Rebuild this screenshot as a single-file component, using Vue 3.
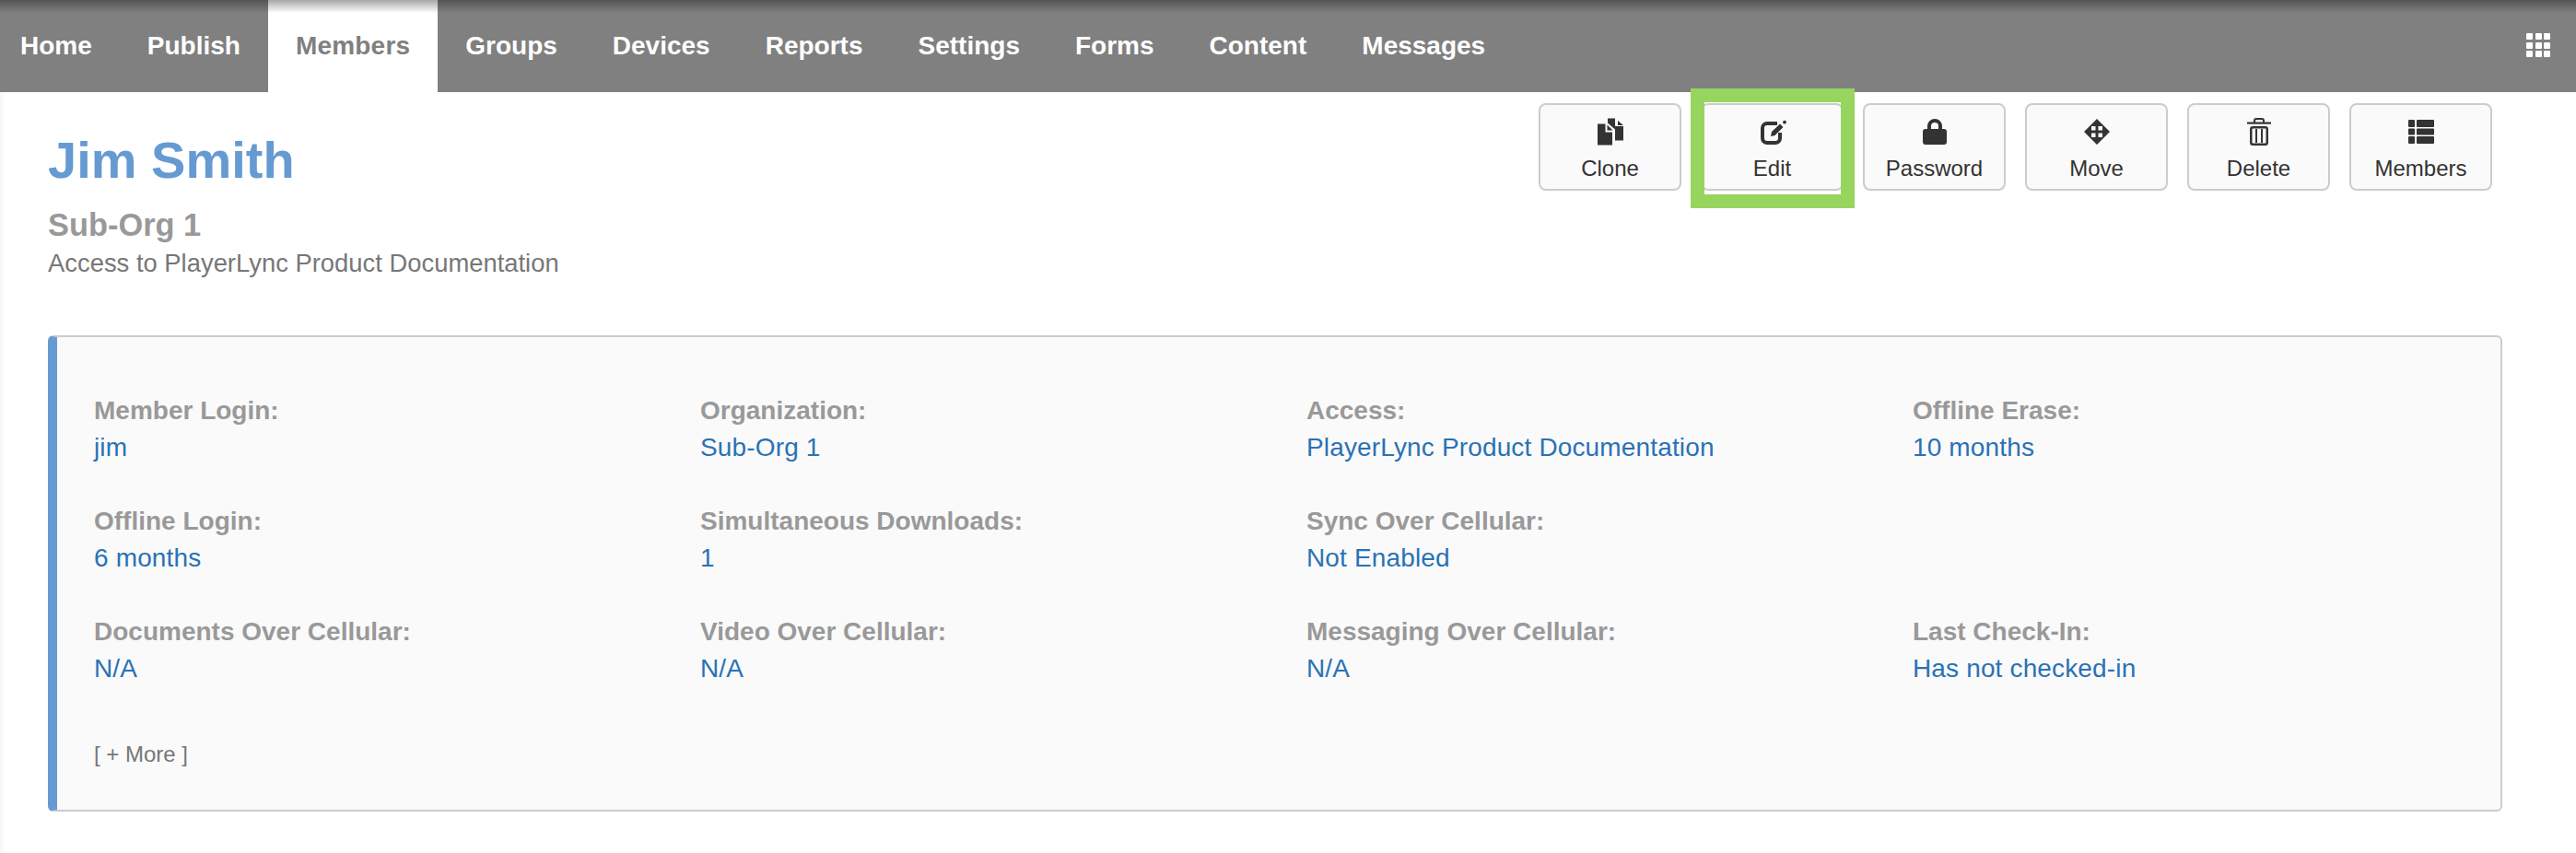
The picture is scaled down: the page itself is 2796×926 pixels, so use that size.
<template>
  <div class="page">
    <nav class="topnav">
      <a
        v-for="item in navItems"
        :key="item"
        class="nav-item"
        :class="{ active: item === 'Members' }"
      >{{ item }}</a>
      <span class="grid-icon">
        <i v-for="n in 9" :key="n"></i>
      </span>
    </nav>

    <div class="header">
      <div class="titles">
        <h1>Jim Smith</h1>
        <h2>Sub-Org 1</h2>
        <p>Access to PlayerLync Product Documentation</p>
      </div>
      <div class="actions">
        <button class="action">
          <svg width="28" height="29" viewBox="0 0 28 29">
            <path d="M0 6h8.500v9H16v14H0z" />
            <path d="M11 0h8v8.500h9V24h-9V12l-8-7z" />
            <path d="M10.500 7l6 6h-6zM22 2.500l6 5h-6z" />
          </svg>
          <span>Clone</span>
        </button>
        <button class="action">
          <svg width="30" height="28" viewBox="0 0 30 28">
            <path class="line" d="M20 5H9a5 5 0 0 0-5 5v11a5 5 0 0 0 5 5h9a5 5 0 0 0 5-5v-6" />
            <path d="M13 19l1-5 9-8.500 3.500 3.500-9 9z" />
            <circle cx="28" cy="3.700" r="1.900" />
          </svg>
          <span>Edit</span>
        </button>
        <button class="action">
          <svg width="26" height="28" viewBox="0 0 26 28">
            <path d="M5 11V8a8 8 0 0 1 16 0v3h2a3 3 0 0 1 3 3v11a3 3 0 0 1-3 3H3a3 3 0 0 1-3-3V14a3 3 0 0 1 3-3zm4 0h8V8a4 4 0 0 0-8 0z" />
          </svg>
          <span>Password</span>
        </button>
        <button class="action">
          <svg width="28" height="28" viewBox="0 0 28 28">
            <path fill-rule="evenodd" d="M14 0l14 14-14 14L0 14zM8 8v4.500h4.500V8zm7.500 0v4.500H20V8zM8 15.500V20h4.500v-4.500zm7.500 0V20H20v-4.500z" />
          </svg>
          <span>Move</span>
        </button>
        <button class="action">
          <svg width="26" height="30" viewBox="0 0 26 30">
            <rect x="0" y="4.500" width="26" height="2.200" />
            <path class="thin" d="M8 5V3a2 2 0 0 1 2-2h6a2 2 0 0 1 2 2v2" />
            <rect class="can" x="4.250" y="10.250" width="17.500" height="18.500" rx="2" />
            <rect x="9" y="12" width="2" height="15" />
            <rect x="15" y="12" width="2" height="15" />
          </svg>
          <span>Delete</span>
        </button>
        <button class="action">
          <svg width="28" height="26" viewBox="0 0 28 26">
            <path d="M1 0h5a1 1 0 0 1 1 1v6a1 1 0 0 1-1 1H1a1 1 0 0 1-1-1V1a1 1 0 0 1 1-1zM10 0h17a1 1 0 0 1 1 1v6a1 1 0 0 1-1 1H10a1 1 0 0 1-1-1V1a1 1 0 0 1 1-1zM1 9.500h5a1 1 0 0 1 1 1v5a1 1 0 0 1-1 1H1a1 1 0 0 1-1-1v-5a1 1 0 0 1 1-1zM10 9.500h17a1 1 0 0 1 1 1v5a1 1 0 0 1-1 1H10a1 1 0 0 1-1-1v-5a1 1 0 0 1 1-1zM1 18h5a1 1 0 0 1 1 1v6a1 1 0 0 1-1 1H1a1 1 0 0 1-1-1v-6a1 1 0 0 1 1-1zM10 18h17a1 1 0 0 1 1 1v6a1 1 0 0 1-1 1H10a1 1 0 0 1-1-1v-6a1 1 0 0 1 1-1z" />
          </svg>
          <span>Members</span>
        </button>
        <div class="callout"></div>
      </div>
    </div>

    <section class="panel">
      <div class="fields">
        <div v-for="(field, i) in fields" :key="i" class="field">
          <template v-if="field">
            <div class="label">{{ field.label }}:</div>
            <div class="value">{{ field.value }}</div>
          </template>
        </div>
      </div>
      <a class="more">[ + More ]</a>
    </section>
  </div>
</template>

<script setup>
const navItems = ['Home', 'Publish', 'Members', 'Groups', 'Devices', 'Reports', 'Settings', 'Forms', 'Content', 'Messages']

const fields = [
  { label: 'Member Login', value: 'jim' },
  { label: 'Organization', value: 'Sub-Org 1' },
  { label: 'Access', value: 'PlayerLync Product Documentation' },
  { label: 'Offline Erase', value: '10 months' },
  { label: 'Offline Login', value: '6 months' },
  { label: 'Simultaneous Downloads', value: '1' },
  { label: 'Sync Over Cellular', value: 'Not Enabled' },
  null,
  { label: 'Documents Over Cellular', value: 'N/A' },
  { label: 'Video Over Cellular', value: 'N/A' },
  { label: 'Messaging Over Cellular', value: 'N/A' },
  { label: 'Last Check-In', value: 'Has not checked-in' },
]
</script>

<style>
body {
  background: #fff;
}
</style>

<style scoped>
.page {
  font-family: "Liberation Sans", Arial, sans-serif;
  height: 926px;
  overflow: hidden;
  background: linear-gradient(to right, #f7f7f7, #fff 6px);
}

.topnav {
  height: 100px;
  display: flex;
  background: #808080;
  position: relative;
}

.topnav::after {
  content: "";
  position: absolute;
  left: 0;
  right: 0;
  top: 0;
  height: 14px;
  background: linear-gradient(to bottom, rgba(0, 0, 0, 0.35), rgba(0, 0, 0, 0));
  pointer-events: none;
}

.nav-item {
  padding: 0 30px;
  line-height: 100px;
  font-size: 28px;
  font-weight: 700;
  color: #fff;
}

.nav-item:first-child {
  padding-left: 22px;
}

.nav-item.active {
  background: #fff;
  color: #808080;
  letter-spacing: 0.200px;
}

.grid-icon {
  margin: 0 28px 2px auto;
  align-self: center;
  display: grid;
  grid-template-columns: repeat(3, 7px);
  grid-auto-rows: 7px;
  gap: 2.500px;
}

.grid-icon i {
  background: #fff;
  border-radius: 1px;
}

.header {
  display: flex;
  justify-content: space-between;
  padding: 12px 91px 0 52px;
}

h1 {
  margin: 31px 0 0;
  font-size: 56px;
  line-height: 62px;
  font-weight: 700;
  color: #659ad2;
}

h2 {
  margin: 18px 0 0;
  font-size: 34.400px;
  line-height: 42px;
  font-weight: 700;
  color: #999;
}

.titles p {
  margin: 4px 0 0;
  font-size: 27.400px;
  line-height: 34px;
  color: #777;
}

.actions {
  display: flex;
  gap: 21px;
  position: relative;
}

.action {
  width: 155px;
  height: 95px;
  box-sizing: border-box;
  padding: 0;
  display: flex;
  flex-direction: column;
  align-items: center;
  border: 2px solid #ccc;
  border-radius: 8px;
  background: #fafafa;
  font-family: inherit;
  font-size: 24px;
  color: #333;
}

.action svg {
  height: 30px;
  margin-top: 14px;
  fill: #333;
}

.action .line {
  fill: none;
  stroke: #333;
  stroke-width: 4;
}

.action .thin {
  fill: none;
  stroke: #333;
  stroke-width: 2;
}

.action .can {
  fill: none;
  stroke: #333;
  stroke-width: 2.500;
}

.action span {
  margin-top: 11px;
  line-height: 28px;
}

.callout {
  position: absolute;
  left: 165px;
  top: -16px;
  width: 178px;
  height: 130px;
  box-sizing: border-box;
  border: 15px solid #97d55f;
}

.panel {
  margin: 61px 80px 0 52px;
  height: 517px;
  box-sizing: border-box;
  border: 2px solid #ccc;
  border-left: 10px solid #659ad2;
  border-radius: 6px;
  background: #fafafa;
  padding: 63px 0 0 40px;
}

.fields {
  display: grid;
  grid-template-columns: repeat(3, 658px) 1fr;
  grid-auto-rows: 120px;
}

.label {
  font-size: 28px;
  line-height: 34px;
  font-weight: 700;
  color: #999;
}

.value {
  margin-top: 6px;
  font-size: 28px;
  line-height: 34px;
  letter-spacing: 0.150px;
  color: #2a72b5;
}

.more {
  display: block;
  margin-top: 15px;
  font-size: 24px;
  line-height: 30px;
  color: #777;
}
</style>
